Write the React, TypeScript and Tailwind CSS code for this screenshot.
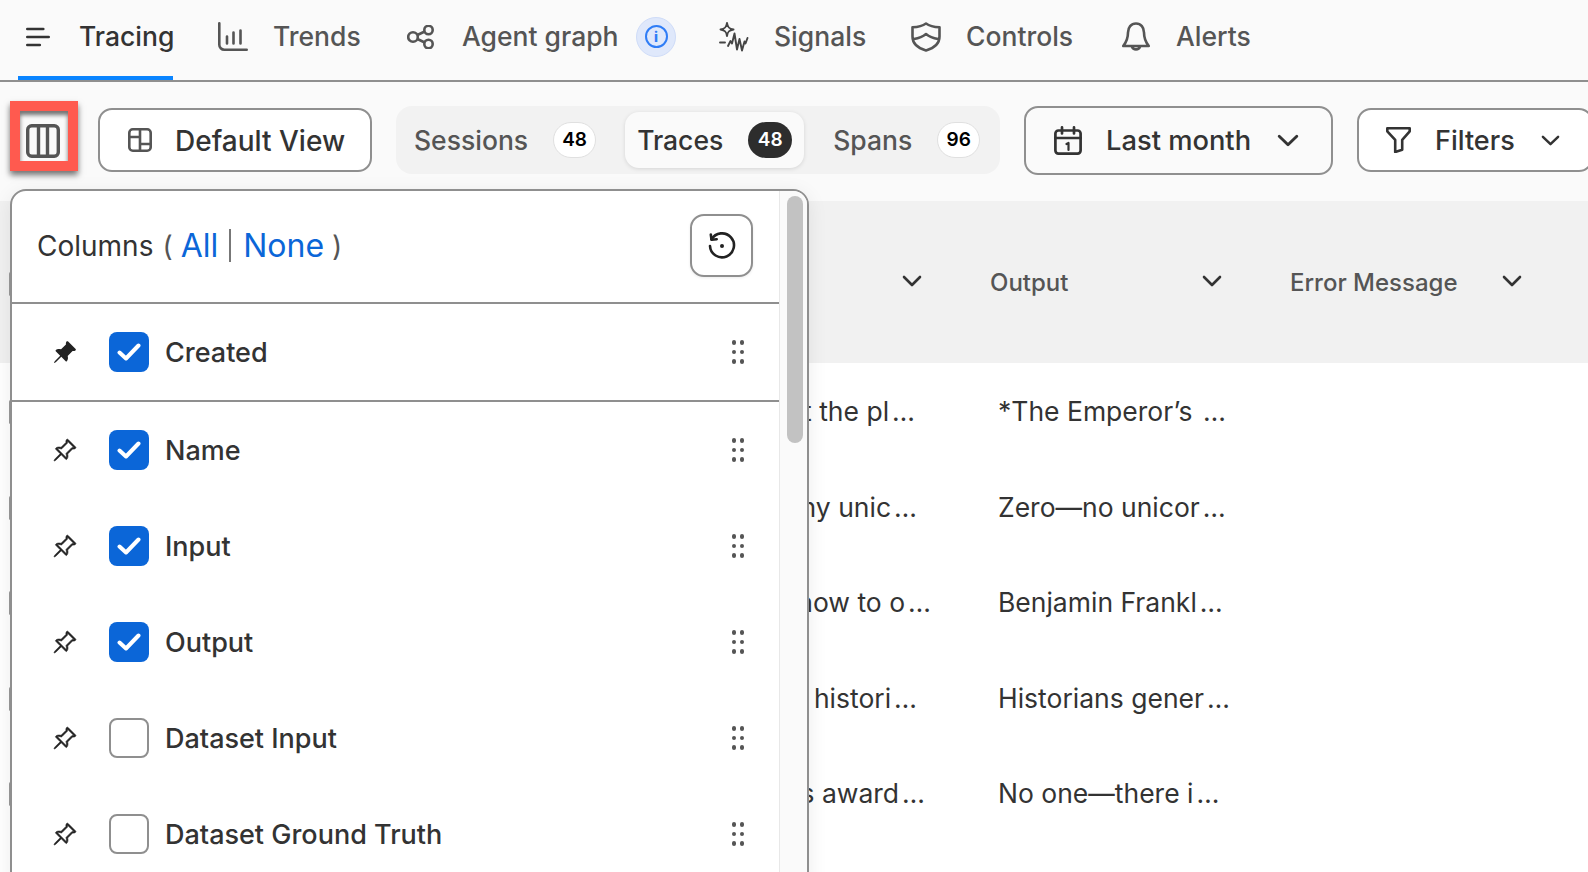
import { BsPinAngle, BsPinAngleFill } from 'react-icons/bs';

const font = { fontFamily: 'Inter, "Liberation Sans", sans-serif' };

const Chevron = ({ className }: { className: string }) => (
  <svg viewBox="0 0 20 12" fill="none" stroke="currentColor" strokeWidth={2.6} strokeLinecap="round" strokeLinejoin="round" preserveAspectRatio="none" className={className}>
    <path d="M2 2l8 8 8-8" />
  </svg>
);

const MenuIcon = () => (
  <svg viewBox="0 0 24 20" fill="none" stroke="#333" strokeWidth={2.6} strokeLinecap="round" className="w-[24px] h-[20px]">
    <path d="M1.300 2h16M1.300 10h21.400M1.300 18h12.500" />
  </svg>
);

const TrendsIcon = () => (
  <svg viewBox="0 0 30 29" fill="none" stroke="#555" strokeWidth={2.6} strokeLinecap="round" className="w-[30px] h-[29px]">
    <path d="M1.300 1.300v21.400a5 5 0 0 0 5 5h22.400M9 14.500v7M15.500 10.500v11M22.500 8.500v13" />
  </svg>
);

const AgentIcon = () => (
  <svg viewBox="0 0 28 24" fill="none" stroke="#555" strokeWidth={2.6} className="w-[28px] h-[24px]">
    <circle cx="6" cy="12" r="4.800" />
    <circle cx="21.500" cy="5" r="4.200" />
    <circle cx="21.500" cy="19" r="4.200" />
    <path d="M10.400 10l6.800-3.200M10.400 14l6.800 3.200" />
  </svg>
);

const SignalsIcon = () => (
  <svg viewBox="0 0 30 30" fill="none" stroke="#444" strokeWidth={1.9} strokeLinecap="round" strokeLinejoin="round" className="w-[30px] h-[30px]">
    <path d="M8 1c.6 4.200 2 5.800 6.500 6.500C10 8.200 8.600 9.800 8 14c-.6-4.200-2-5.800-6.500-6.500C6 6.800 7.400 5.200 8 1z" />
    <path d="M1 20.500h5M9 24l2.500-5 1.500 2.500 2.500-10 2.500 16 2.500-10.500 2.500 11.500 2.500-9 1 2 2-5.500" />
  </svg>
);

const ShieldIcon = () => (
  <svg viewBox="0 0 30 30" fill="none" stroke="#555" strokeWidth={2.6} strokeLinejoin="round" strokeLinecap="round" className="w-[30px] h-[30px]">
    <path d="M15 1.500c3 2.200 7 3.500 13.500 3.800v9.200c0 6.500-5 11.500-13.500 14-8.500-2.500-13.500-7.500-13.500-14V5.300C8 5 12 3.700 15 1.500z" />
    <path d="M3 17c5-.8 9-2.500 12-5 3 2.500 7 4.200 12 5" />
  </svg>
);

const BellIcon = () => (
  <svg viewBox="0 0 28 30" fill="none" stroke="#555" strokeWidth={2.6} strokeLinecap="round" strokeLinejoin="round" className="w-[28px] h-[30px]">
    <path d="M14 1.500c-5 0-8 4-8 9 0 6-1.500 9.500-4.800 13.500h25.600C23.500 20 22 16.500 22 10.500c0-5-3-9-8-9z" />
    <path d="M10 24.500a4.200 4.200 0 0 0 8 0" />
  </svg>
);

const ColumnsIcon = () => (
  <svg viewBox="0 0 34 34" fill="none" stroke="#555" strokeWidth={3.4} strokeLinejoin="round" className="w-[34px] h-[34px]">
    <rect x="1.700" y="1.700" width="30.600" height="30.600" rx="4" />
    <path d="M12.500 1.700v30.600M21.500 1.700v30.600" />
  </svg>
);

const LayoutIcon = () => (
  <svg viewBox="0 0 24 24" fill="none" stroke="#555" strokeWidth={2.6} strokeLinejoin="round" className="w-[24px] h-[24px]">
    <rect x="1.300" y="1.300" width="21.400" height="21.400" rx="3.500" />
    <path d="M1.300 9h10.700M12 1.300v21.400M12 16h10.700" />
  </svg>
);

const CalendarIcon = () => (
  <svg viewBox="0 0 28 29" fill="none" stroke="#333" strokeWidth={2.7} strokeLinecap="round" strokeLinejoin="round" className="w-[28px] h-[29px]">
    <rect x="1.400" y="4.500" width="25.200" height="23.100" rx="3" />
    <path d="M1.400 12h25.200M8 1.400v6M20 1.400v6" />
    <path d="M12.500 18l2-1v7" strokeWidth={2.2} />
  </svg>
);

const FilterIcon = () => (
  <svg viewBox="0 0 25 26" fill="none" stroke="#333" strokeWidth={2.6} strokeLinejoin="round" className="w-[25px] h-[26px]">
    <path d="M1.300 1.300h22.400v3l-7.500 8.500v10l-7 2.200V12.800L1.300 4.300z" />
  </svg>
);

const ResetIcon = () => (
  <svg viewBox="0 0 28 28" fill="none" stroke="#222" strokeWidth={2.6} strokeLinecap="round" strokeLinejoin="round" className="w-[28px] h-[28px]">
    <path d="M3.500 7.500A12 12 0 1 1 2 14" />
    <path d="M2.800 2.500l.7 5.200 5.200-.5" />
    <circle cx="14" cy="14" r="2" fill="#222" stroke="none" />
  </svg>
);

const DragDots = () => (
  <div className="grid grid-cols-2 gap-x-[3.500px] gap-y-[5px] mr-[35px]">
    {[0, 1, 2, 3, 4, 5].map(i => (
      <span key={i} className="w-[4.500px] h-[4.500px] rounded-full bg-[#555]" />
    ))}
  </div>
);

// The reference's ellipsis glyph is wider than Inter's, so it gets some extra tracking
const Ellipsis = () => <span className="ml-[3px] mr-[-4px] tracking-[4px]">…</span>;

const columns = [
  { label: 'Created', checked: true, pinned: true },
  { label: 'Name', checked: true, pinned: false },
  { label: 'Input', checked: true, pinned: false },
  { label: 'Output', checked: true, pinned: false },
  { label: 'Dataset Input', checked: false, pinned: false },
  { label: 'Dataset Ground Truth', checked: false, pinned: false },
];

const rows = [
  { input: 'What happened at the pl', inputWidth: 'w-[225px]', output: '*The Emperor’s ' },
  { input: 'How many unic', inputWidth: 'w-[227px]', output: 'Zero—no unicor' },
  { input: 'Who knows how to o', inputWidth: 'w-[241px]', output: 'Benjamin Frankl' },
  { input: 'What do histori', inputWidth: 'w-[227px]', output: 'Historians gener' },
  { input: 'Who was award', inputWidth: 'w-[235px]', output: 'No one—there i' },
];

const NavItem = ({ icon, label, className, labelWidth, gap }: { icon: React.ReactNode; label: string; className: string; labelWidth: string; gap: string }) => (
  <div className={`flex items-center text-[26.500px] font-medium text-[#555] ${className}`}>
    {icon}
    <span className={`whitespace-nowrap ${gap} ${labelWidth}`}>{label}</span>
  </div>
);

export default function App() {
  return (
    <div style={font} className="relative flex flex-col w-full h-screen overflow-hidden bg-[#fafafa] text-[#333]">
      {/* Top nav */}
      <nav className="flex items-center shrink-0 h-[82px] pb-[7px] pl-[26px] border-b-2 border-[#8f8f8f]">
        <MenuIcon />
        <div className="relative w-[94px] ml-[29px] text-[26.500px] font-medium text-[#333]">
          Tracing
          <span className="absolute -left-[61px] right-0 -bottom-[24px] h-[4px] bg-[#0a84ff]" />
        </div>
        <NavItem icon={<TrendsIcon />} label="Trends" className="ml-[45px]" gap="ml-[25px]" labelWidth="w-[88px]" />
        <NavItem icon={<AgentIcon />} label="Agent graph" className="ml-[46px]" gap="ml-[27px]" labelWidth="w-[155px]" />
        <div className="ml-[19px] flex items-center justify-center w-[40px] h-[40px] rounded-full bg-[#dfe8fb] border border-[#cfdcf8]">
          <div className="flex items-center justify-center w-[23px] h-[23px] rounded-full border-[2.500px] border-[#2f7df6] text-[14px] leading-none font-extrabold text-[#2f7df6]">i</div>
        </div>
        <NavItem icon={<SignalsIcon />} label="Signals" className="ml-[43px]" gap="ml-[25px]" labelWidth="w-[91px]" />
        <NavItem icon={<ShieldIcon />} label="Controls" className="ml-[46px]" gap="ml-[25px]" labelWidth="w-[109px]" />
        <NavItem icon={<BellIcon />} label="Alerts" className="ml-[47px]" gap="ml-[26px]" labelWidth="w-[77px]" />
      </nav>

      {/* Toolbar */}
      <div className="flex items-start shrink-0 h-[119px] pt-[19px] pl-[10px] whitespace-nowrap">
        <button className="flex items-center justify-center shrink-0 w-[68px] h-[70px] pt-[10px] pr-[3px] border-[10px] border-[#ff5a4f] bg-[#fafafa] shadow-[0_4px_6px_rgba(0,0,0,0.55),inset_0_4px_4px_rgba(0,0,0,0.55)]">
          <ColumnsIcon />
        </button>

        <button className="flex items-center shrink-0 w-[274px] h-[64px] mt-[7px] ml-[20px] pl-[28px] rounded-[14px] border-2 border-[#8f8f8f] bg-white text-[28px] font-medium">
          <LayoutIcon />
          <span className="ml-[23px] pt-[2px]">Default View</span>
        </button>

        <div className="flex items-center shrink-0 w-[604px] h-[68px] mt-[5px] ml-[24px] pl-[18px] rounded-[16px] bg-[#f2f2f2] text-[26.500px] font-medium text-[#555]">
          <span className="pt-[2px]">Sessions</span>
          <span className="flex items-center justify-center w-[43px] h-[36px] ml-[25px] rounded-full bg-white border border-[#e0e0e0] text-[19px] font-semibold text-black">48</span>
          <div className="flex items-center w-[179px] h-[56px] ml-[29px] pl-[12px] rounded-[14px] bg-[#fafafa] text-[#333] shadow-[0_1px_4px_rgba(0,0,0,0.12)]">
            <span className="pt-[2px]">Traces</span>
            <span className="flex items-center justify-center w-[44px] h-[36px] ml-[25px] rounded-full bg-[#2d2d2d] text-[19px] font-semibold text-white">48</span>
          </div>
          <span className="ml-[29px] pt-[2px]">Spans</span>
          <span className="flex items-center justify-center w-[43px] h-[36px] ml-[25px] rounded-full bg-white border border-[#e0e0e0] text-[19px] font-semibold text-black">96</span>
        </div>

        <button className="flex items-center shrink-0 w-[309px] h-[69px] mt-[5px] ml-[24px] pl-[28px] rounded-[14px] border-2 border-[#8f8f8f] bg-[#fafafa] text-[27.300px] font-medium">
          <CalendarIcon />
          <span className="ml-[24px] pt-[2px]">Last month</span>
          <Chevron className="w-[22px] h-[13px] ml-[26px] text-[#333]" />
        </button>

        <button className="flex items-center shrink-0 w-[236px] h-[64px] mt-[7px] ml-[24px] pl-[27px] rounded-[14px] border-2 border-[#8f8f8f] bg-white text-[27px] font-medium">
          <FilterIcon />
          <span className="ml-[24px] pt-[2px]">Filters</span>
          <Chevron className="w-[19px] h-[11px] ml-[26px] text-[#333]" />
        </button>
      </div>

      {/* Table behind the popover */}
      <div className="flex items-center shrink-0 h-[162px] bg-[#f1f1f1] text-[24px] font-medium text-[#555]">
        <div className="w-[690px] shrink-0 pl-[9px]">
          <span className="block w-[3px] h-[24px] mt-[4px] rounded bg-[#999]" />
        </div>
        <div className="flex justify-end items-center w-[300px] shrink-0 pr-[68px]">
          <Chevron className="w-[20px] h-[12px] mb-[2px] text-[#333]" />
        </div>
        <div className="flex justify-between items-center w-[232px] mr-[68px] shrink-0">
          <span className="pt-[2px]">Output</span>
          <Chevron className="w-[20px] h-[12px] mb-[2px] text-[#333]" />
        </div>
        <div className="flex justify-between items-center w-[232px] shrink-0">
          <span className="pt-[2px] whitespace-nowrap">Error Message</span>
          <Chevron className="w-[20px] h-[12px] mb-[2px] text-[#333]" />
        </div>
      </div>
      <div className="flex-1 bg-white">
        {rows.map(row => (
          <div key={row.output} className="flex items-center h-[95.500px] pt-[3px] text-[26.500px] text-[#333] whitespace-nowrap">
            <div className="w-[690px] shrink-0 pl-[9px]">
              <span className="block w-[3px] h-[24px] rounded bg-[#999]" />
            </div>
            <div className="w-[300px] shrink-0">
              <div className={`flex justify-end ${row.inputWidth}`}>
                <span>
                  {row.input}
                  <Ellipsis />
                </span>
              </div>
            </div>
            <div className="pl-[8px]">
              {row.output}
              <Ellipsis />
            </div>
          </div>
        ))}
      </div>

      {/* Columns popover */}
      <div className="absolute left-[10px] top-[189px] w-[799px] h-[700px] flex rounded-t-[16px] border-2 border-[#8f8f8f] bg-white overflow-hidden shadow-[0_4px_20px_rgba(0,0,0,0.08)]">
        <div className="flex-1 min-w-0">
          <div className="flex items-center justify-between h-[113px] pl-[25px] pr-[26px] pb-[2px] border-b-2 border-[#8f8f8f] text-[28px]">
            <div className="flex items-center">
              <span className="text-[#333]">Columns</span>
              <span className="ml-[9px] text-[#555]">(</span>
              <a className="ml-[8px] text-[32px] leading-none text-[#0b66d8]">All</a>
              <span className="ml-[11px] w-[2px] h-[33px] bg-[#777]" />
              <a className="ml-[12px] text-[32px] leading-none text-[#0b66d8]">None</a>
              <span className="ml-[8px] text-[#555]">)</span>
            </div>
            <button className="flex items-center justify-center w-[63px] h-[63px] rounded-[14px] border-2 border-[#8f8f8f] bg-white shadow-[0_1px_3px_rgba(0,0,0,0.08)]">
              <ResetIcon />
            </button>
          </div>
          {columns.map(col => (
            <div
              key={col.label}
              className={`flex items-center pl-[40px] ${col.pinned ? 'border-b-2 border-[#8f8f8f] h-[98px]' : 'h-[96px]'}`}
            >
              {col.pinned ? (
                <BsPinAngleFill className="w-[25px] h-[25px] text-[#222]" />
              ) : (
                <BsPinAngle stroke="currentColor" strokeWidth={0.4} className="w-[25px] h-[25px] text-[#222]" />
              )}
              <div
                className={`flex items-center justify-center w-[40px] h-[40px] ml-[32px] rounded-[8px] ${
                  col.checked ? 'bg-[#0b66d8]' : 'bg-white border-2 border-[#8f8f8f]'
                }`}
              >
                {col.checked && (
                  <svg viewBox="0 0 24 18" fill="none" stroke="#fff" strokeWidth={4} strokeLinecap="round" strokeLinejoin="round" className="w-[24px] h-[18px]">
                    <path d="M2.500 9.500l6.500 6 12.500-13" />
                  </svg>
                )}
              </div>
              <span className="ml-[16px] pt-[2px] text-[27px] font-medium text-[#333]">{col.label}</span>
              <div className="ml-auto">
                <DragDots />
              </div>
            </div>
          ))}
        </div>
        <div className="w-[28px] shrink-0 pt-[5px] pl-[7px] border-l border-[#e8e8e8] bg-[#fafafa]">
          <div className="w-[16px] h-[247px] rounded-full bg-[#c2c2c2]" />
        </div>
      </div>
    </div>
  );
}
